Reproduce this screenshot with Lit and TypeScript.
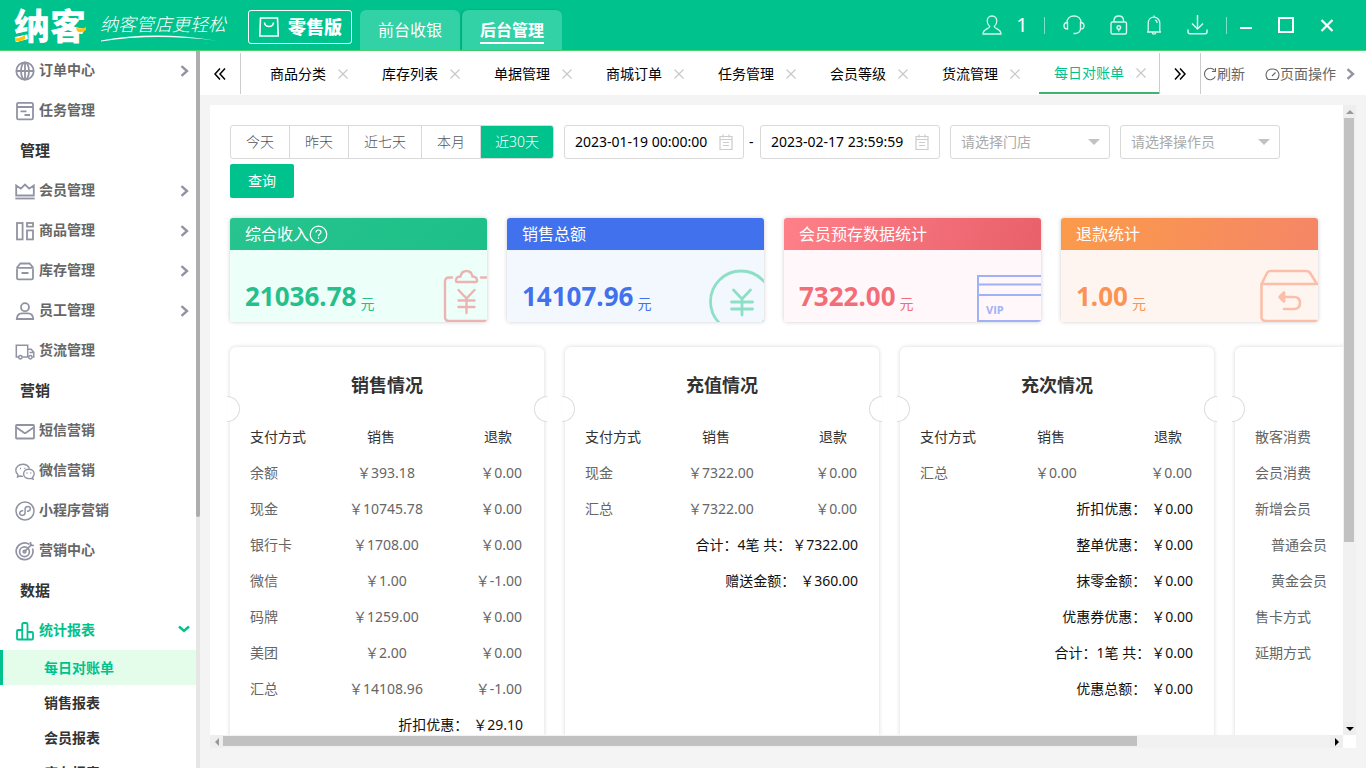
import { LitElement, html, svg, css, nothing } from "lit";
import { customElement, property } from "lit/decorators.js";
import { classMap } from "lit/directives/class-map.js";

const base = css`
  * {
    box-sizing: border-box;
  }
  svg {
    display: block;
    flex: none;
    fill: none;
    stroke: currentColor;
  }
  button,
  input,
  select {
    font: inherit;
    color: inherit;
    margin: 0;
    padding: 0;
    border: 0;
    background: none;
  }
  a {
    color: inherit;
    text-decoration: none;
  }
`;

const menuIcons: Record<string, unknown> = {
  globe: svg`<g stroke-width="1.8"><circle cx="10" cy="10" r="8.7"/><ellipse cx="10" cy="10" rx="4" ry="8.7"/><path d="M10 1.3v17.4M1.3 10h17.4"/></g>`,
  task: svg`<g stroke-width="1.8"><rect x="2" y="1.8" width="16" height="16.6" rx="1.5"/><path d="M2 6h16M5.5 10.3h6M9.5 14h5.5"/></g>`,
  crown: svg`<g stroke-width="1.8"><path d="M1.2 4.5v10h17.6v-10l-4.6 3.2L10 3.6 5.8 7.7z"/><path d="M.3 17.5h19.4" /></g>`,
  goods: svg`<g stroke-width="1.8"><rect x="2" y="2" width="5.6" height="16.4"/><rect x="12" y="2" width="6" height="3.6"/><rect x="12" y="9.4" width="6" height="9"/></g>`,
  stock: svg`<g stroke-width="1.8"><path d="M2 8v9q0 1.4 1.4 1.4h13.2q1.4 0 1.4-1.4V8M1.2 6.9h17.6M2 6.5l3.4-4h9.2l3.4 4M6.5 12h7"/></g>`,
  staff: svg`<g stroke-width="1.8"><circle cx="10" cy="6.2" r="4"/><path d="M1.8 18c.3-4 2.6-5.6 5-5.6h6.4c2.4 0 4.700 1.600 5 5.600z"/></g>`,
  truck: svg`<g stroke-width="1.5"><path d="M3.500 16H1.300V4.300h11.400V16H7.500M12.700 8.300h3.500l2.600 3v4.700h-1.300M14.500 11.500h4"/><circle cx="5.400" cy="16.200" r="1.700"/><circle cx="15.400" cy="16.200" r="1.700"/></g>`,
  mail: svg`<g stroke-width="1.800"><rect x="1" y="4" width="18" height="13.500" rx=".8"/><path d="M1.500 6.500L9 11.800q1 .7 2 0l7.500-5.300"/></g>`,
  wechat: svg`<g stroke-width="1.400"><path d="M8 15.300c-1 .1-1.900 0-2.800-.3L2.500 16l.5-2.300C1.500 12.500.8 11 .8 9.300c0-3.400 3.100-6 6.900-6 3.200 0 5.900 1.800 6.700 4.300"/><path d="M13.900 8.200c3 0 5.300 2 5.300 4.600 0 1.300-.6 2.400-1.500 3.300l.4 2.100-2.100-.9c-.6.200-1.300.3-2.100.3-3 0-5.300-2.100-5.300-4.800s2.300-4.600 5.300-4.600z"/><path d="M5 7.500h1M9.300 7.500h1M11.500 12h1M15.300 12h1" /></g>`,
  mini: svg`<g stroke-width="1.500"><circle cx="10" cy="10" r="9"/><path d="M8.200 9.800c-2.200-.3-3.500.8-3.500 2.300 0 1.400 1.100 2.300 2.500 2.300 1.700 0 2.900-1.200 2.900-2.800V8.300c0-1.500 1.100-2.700 2.800-2.700 1.400 0 2.400.9 2.400 2.200 0 1.600-1.300 2.500-3.300 2.300"/></g>`,
  target: svg`<g stroke-width="1.700"><path d="M14.200 3.300A8.400 8.400 0 1 0 17.500 7.500"/><circle cx="9.500" cy="10.700" r="4.900"/><path d="M9.500 10.700L17 3.200M15.500 1v3.500H19"/><circle cx="9.500" cy="10.700" r="1.300"/></g>`,
  chart: svg`<g stroke-width="1.800" stroke-linejoin="round"><path d="M7.200 18.500H3q-1 0-1-1V10q0-1 1-1h4.200M7.200 18.500V3.500Q7.200 2 8.700 2h2.300q1.500 0 1.500 1.500v15M12.500 11H17q1 0 1 1v5.500q0 1-1 1H7.200"/></g>`,
};

type MenuRow = { label: string; icon?: string; arrow?: boolean; open?: boolean };
const menu: MenuRow[] = [
  { label: "订单中心", icon: "globe", arrow: true },
  { label: "任务管理", icon: "task" },
  { label: "管理" },
  { label: "会员管理", icon: "crown", arrow: true },
  { label: "商品管理", icon: "goods", arrow: true },
  { label: "库存管理", icon: "stock", arrow: true },
  { label: "员工管理", icon: "staff", arrow: true },
  { label: "货流管理", icon: "truck" },
  { label: "营销" },
  { label: "短信营销", icon: "mail" },
  { label: "微信营销", icon: "wechat" },
  { label: "小程序营销", icon: "mini" },
  { label: "营销中心", icon: "target" },
  { label: "数据" },
  { label: "统计报表", icon: "chart", open: true },
];
const reports = ["每日对账单", "销售报表", "会员报表", "库存报表"];
const tabs = ["商品分类", "库存列表", "单据管理", "商城订单", "任务管理", "会员等级", "货流管理", "每日对账单"];
const ranges = ["今天", "昨天", "近七天", "本月", "近30天"];

const stats = [
  { tone: "green", title: "综合收入", amount: "21036.78", help: true },
  { tone: "blue", title: "销售总额", amount: "14107.96" },
  { tone: "red", title: "会员预存数据统计", amount: "7322.00" },
  { tone: "orange", title: "退款统计", amount: "1.00" },
];

const artwork: Record<string, unknown> = {
  green: svg`<g stroke="#edb3b3" stroke-width="2.400" stroke-linecap="round"><path d="M9 8.500H6q-4 0-4 4V48q0 4 4 4h38M38 8.500h6"/><path d="M14.500 13q-2 0-1.500-2 .5-3.500 4.500-3.500 1-5.500 6-5.500t6 5.500q4 0 4.500 3.500.5 2-1.500 2z"/><path d="M15.500 21l8 8.500 8-8.500M23.500 29.500V44M15.500 31.500h16M15.500 38h16"/></g>`,
  blue: svg`<g stroke="#8ddfc6" stroke-width="2.800" stroke-linecap="round"><circle cx="32" cy="32.500" r="30.500"/><path d="M24.500 21l8.500 9 8.500-9M33 30v16M22.500 33h21M22.500 40h21"/></g>`,
  red: svg`<g stroke="#9fb2f6" stroke-width="2"><path d="M66 7H2v45h64M2 15.500h64M2 26h64"/></g><text x="10" y="45" class="vip">VIP</text>`,
  orange: svg`<g stroke="#fbbfa9" stroke-width="2.600" stroke-linecap="round" stroke-linejoin="round"><path d="M59 15H2.500L8 4q1-2 3-2h36q3 0 4.500 2.500L58 15M2.500 15v33q0 4 4.500 4h52M23 28h12q6 0 6 6t-6 6H25"/><path d="M25 23.500L20.500 28l4.500 4.500z" fill="#fbbfa9"/></g>`,
};
const artWidth: Record<string, number> = { green: 44, blue: 55, red: 65, orange: 59 };

@customElement("stat-card")
class StatCard extends LitElement {
  @property() tone = "green";
  @property() label = "";
  @property() amount = "";
  @property({ type: Boolean }) help = false;

  static styles = [
    base,
    css`
      :host {
        display: block;
        min-width: 0;
      }
      .card {
        border-radius: 3px;
        overflow: hidden;
        box-shadow: 0 0 4px rgba(0, 0, 0, 0.2);
      }
      .head {
        display: flex;
        align-items: center;
        height: 32px;
        padding: 0 15px;
        color: #fff;
        font-size: 16px;
      }
      .body {
        display: flex;
        justify-content: space-between;
        align-items: flex-end;
        height: 72px;
        padding-left: 15px;
      }
      .sum {
        display: flex;
        align-items: center;
        gap: 4px;
        padding-bottom: 8px;
        line-height: 36px;
      }
      .num {
        font-size: 26px;
        font-weight: 700;
      }
      .unit {
        font-size: 14px;
        line-height: 20px;
        padding-top: 16px;
      }
      .vip {
        font: 700 11px "Open Sans", sans-serif;
        fill: #9fb2f6;
        stroke: none;
      }
      .green .head { background: linear-gradient(135deg, #27c48f, #1dbf88); }
      .green .body { background: #edfff9; color: #25bf8c; }
      .blue .head { background: #4171ec; }
      .blue .body { background: #f3f8ff; color: #4171ec; }
      .red .head { background: linear-gradient(110deg, #ff8089, #e8606a); }
      .red .body { background: #fff7f9; color: #f26d78; }
      .orange .head { background: linear-gradient(110deg, #fb9b49, #f58667); }
      .orange .body { background: #fff5f0; color: #fb9355; }
    `,
  ];

  render() {
    const w = artWidth[this.tone];
    return html`<section class="card ${this.tone}">
      <div class="head">
        ${this.label}
        ${this.help
          ? html`<svg width="19" height="19" viewBox="0 0 19 19" stroke-width="1.200"><circle cx="9.500" cy="9.500" r="8.300" /><path d="M7 7.500q0-2.500 2.500-2.500T12 7.200c0 1.800-2.500 1.900-2.500 4M9.500 12.500V14" /></svg>`
          : nothing}
      </div>
      <div class="body">
        <div class="sum"><span class="num">${this.amount}</span><span class="unit">元</span></div>
        <svg width=${w} height="53" viewBox="0 0 ${w} 53">${artwork[this.tone]}</svg>
      </div>
    </section>`;
  }
}

type Ticket = {
  title: string;
  rows?: string[][];
  foot?: { label: string; value: string; tight?: boolean }[];
  list?: { label: string; sub?: boolean }[];
};

const tickets: Ticket[] = [
  {
    title: "销售情况",
    rows: [
      ["余额", "￥393.18", "￥0.00"],
      ["现金", "￥10745.78", "￥0.00"],
      ["银行卡", "￥1708.00", "￥0.00"],
      ["微信", "￥1.00", "￥-1.00"],
      ["码牌", "￥1259.00", "￥0.00"],
      ["美团", "￥2.00", "￥0.00"],
      ["汇总", "￥14108.96", "￥-1.00"],
    ],
    foot: [{ label: "折扣优惠：", value: "￥29.10" }],
  },
  {
    title: "充值情况",
    rows: [
      ["现金", "￥7322.00", "￥0.00"],
      ["汇总", "￥7322.00", "￥0.00"],
    ],
    foot: [
      { label: "合计：4笔 共：", value: "￥7322.00", tight: true },
      { label: "赠送金额：", value: "￥360.00" },
    ],
  },
  {
    title: "充次情况",
    rows: [["汇总", "￥0.00", "￥0.00"]],
    foot: [
      { label: "折扣优惠：", value: "￥0.00" },
      { label: "整单优惠：", value: "￥0.00" },
      { label: "抹零金额：", value: "￥0.00" },
      { label: "优惠券优惠：", value: "￥0.00" },
      { label: "合计：1笔 共：", value: "￥0.00", tight: true },
      { label: "优惠总额：", value: "￥0.00" },
    ],
  },
  {
    title: "",
    list: [
      { label: "散客消费" },
      { label: "会员消费" },
      { label: "新增会员" },
      { label: "普通会员", sub: true },
      { label: "黄金会员", sub: true },
      { label: "售卡方式" },
      { label: "延期方式" },
    ],
  },
];

@customElement("report-ticket")
class ReportTicket extends LitElement {
  @property({ attribute: false }) ticket!: Ticket;

  static styles = [
    base,
    css`
      :host {
        display: block;
        flex: none;
        width: 314px;
      }
      .card {
        position: relative;
        height: 100%;
        padding: 20px 20px;
        background: #fff;
        border-radius: 6px;
        box-shadow: 0 0 4px rgba(0, 0, 0, 0.16);
      }
      .notch {
        position: absolute;
        top: 49px;
        width: 13px;
        height: 26px;
        background: #fff;
        border: 1px solid #dcdcdc;
      }
      .left {
        left: -3px;
        border-left: 0;
        border-radius: 0 13px 13px 0;
      }
      .right {
        right: -3px;
        border-right: 0;
        border-radius: 13px 0 0 13px;
      }
      h2 {
        margin: 0 0 16px;
        min-height: 36px;
        font-size: 18px;
        line-height: 36px;
        text-align: center;
        color: #333;
      }
      table {
        width: 100%;
        table-layout: fixed;
        border-collapse: collapse;
      }
      th,
      td {
        height: 36px;
        padding: 0;
        font-weight: 400;
        text-align: center;
        color: #666;
      }
      thead th {
        padding-right: 12px;
        color: #333;
      }
      th:first-child {
        text-align: left;
      }
      th:last-child,
      td:last-child {
        text-align: right;
      }
      tbody td {
        padding-right: 2px;
      }
      tfoot td {
        padding-right: 1px;
        color: #111;
      }
      .value {
        margin-left: 5px;
      }
      .tight {
        margin-left: 1px;
      }
      ul {
        margin: 0;
        padding: 0;
        list-style: none;
        line-height: 36px;
        color: #666;
      }
      .sub {
        padding-left: 16px;
      }
    `,
  ];

  render() {
    const t = this.ticket;
    return html`<section class="card">
      <i class="notch left"></i><i class="notch right"></i>
      <h2>${t.title}</h2>
      ${t.rows
        ? html`<table>
            <thead><tr><th>支付方式</th><th>销售</th><th>退款</th></tr></thead>
            <tbody>${t.rows.map((r) => html`<tr><th scope="row">${r[0]}</th><td>${r[1]}</td><td>${r[2]}</td></tr>`)}</tbody>
            <tfoot>${t.foot!.map((f) => html`<tr><td colspan="3">${f.label}<span class=${classMap({ value: true, tight: !!f.tight })}>${f.value}</span></td></tr>`)}</tfoot>
          </table>`
        : html`<ul>${t.list!.map((l) => html`<li class=${classMap({ sub: !!l.sub })}>${l.label}</li>`)}</ul>`}
    </section>`;
  }
}

@customElement("app-root")
class AppRoot extends LitElement {
  static styles = [
    base,
    css`
      :host {
        display: grid;
        grid-template-rows: 50px minmax(0, 1fr);
        height: 100vh;
        overflow: hidden;
        background: #f4f4f4;
        font: 14px/20px "Noto Sans", "Noto Sans CJK SC", sans-serif;
        color: #000;
      }
      header {
        position: relative;
        z-index: 1;
        display: flex;
        align-items: flex-start;
        padding-left: 14px;
        background: #00c28c;
        box-shadow: 0 1px 0 #4bd16f;
        color: #fff;
      }
      .brand {
        position: relative;
        width: 74px;
        font-size: 36px;
        line-height: 54px;
        font-weight: 900;
        white-space: nowrap;
      }
      .accent {
        position: absolute;
        left: 0;
        top: 25px;
      }
      .slogan {
        width: 134px;
        padding: 14px 0 0 12px;
        font-size: 18px;
        line-height: 20px;
        font-style: italic;
        font-weight: 300;
        white-space: nowrap;
      }
      .edition {
        display: flex;
        align-items: center;
        gap: 9px;
        height: 34px;
        width: 104px;
        margin: 10px 8px 0 26px;
        padding-left: 10px;
        border: 1px solid #fff;
        border-radius: 3px;
        font-size: 18px;
        font-weight: 900;
      }
      .modes {
        display: flex;
        gap: 2px;
        padding-top: 10px;
      }
      .mode {
        width: 100px;
        height: 40px;
        border-radius: 6px 6px 0 0;
        background: #33d1a6;
        font-size: 16px;
        line-height: 24px;
        text-align: center;
      }
      .mode.on {
        font-weight: 700;
        box-shadow: -1px 0 2px rgba(0, 110, 80, 0.4);
      }
      .mode span {
        display: inline-block;
        padding-top: 2px;
        border-bottom: 2px solid transparent;
      }
      .mode.on span {
        border-color: #fff;
      }
      .tools {
        display: flex;
        align-items: center;
        height: 50px;
        margin-left: auto;
        padding-right: 31px;
        color: #d6f7ec;
      }
      .tools button {
        display: flex;
        align-items: center;
      }
      .count {
        width: 20px;
        margin: 0 12px 0 10px;
        font-size: 20px;
        color: #fff;
      }
      .rule {
        width: 1px;
        height: 17px;
        background: #7ce0c4;
      }
      .g12 { margin-right: 12px; }
      .g18 { margin-right: 18px; }
      .g25 { margin-right: 25px; }
      .win { color: #fff; }
      .shell {
        display: grid;
        grid-template-columns: 200px minmax(0, 1fr);
        min-height: 0;
      }
      aside {
        display: grid;
        grid-template-columns: minmax(0, 1fr) 4px;
        min-height: 0;
        overflow: hidden;
        background: #fff;
      }
      nav {
        min-width: 0;
        overflow: hidden;
      }
      .item {
        display: flex;
        align-items: center;
        gap: 4px;
        height: 40px;
        padding: 0 6px 0 15px;
        font-weight: 700;
        color: #666;
      }
      .item svg {
        color: #9193a3;
        margin-top: 2px;
      }
      .item .chev {
        margin-left: auto;
      }
      .item.open,
      .item.open svg {
        color: #00c28c;
      }
      .item.open .chev {
        margin-top: 0;
      }
      .group {
        padding-left: 20px;
        font-size: 15px;
        line-height: 40px;
        font-weight: 700;
        color: #333;
      }
      .report {
        display: block;
        padding-left: 41px;
        border-left: 3px solid transparent;
        line-height: 35px;
        font-weight: 700;
        color: #333;
      }
      .report.on {
        color: #00c28c;
        background: #e3fdea;
        border-color: #00c28c;
      }
      .sidebar-track {
        background: #e6e6e6;
      }
      .sidebar-thumb {
        height: 65%;
        border-radius: 0 0 2px 2px;
        background: #adadad;
      }
      main {
        display: grid;
        grid-template-rows: 45px minmax(0, 1fr);
        min-width: 0;
        min-height: 0;
      }
      .tabbar {
        display: flex;
        padding: 3px 0 1px;
        background: #fff;
      }
      .shift {
        display: grid;
        place-items: center;
        width: 41px;
        flex: none;
        border-right: 1px solid #ccc;
      }
      .tabs {
        display: flex;
        gap: 6px;
        flex: 1;
        min-width: 0;
        overflow: hidden;
        padding-left: 14px;
        border-right: 1px solid #ccc;
      }
      .tab {
        display: flex;
        flex: none;
        align-items: center;
        gap: 12px;
        padding: 2px 13px 0 15px;
        white-space: nowrap;
        border-bottom: 2px solid transparent;
      }
      .tab svg {
        color: #c8c8c8;
      }
      .tab.on {
        padding-top: 0;
        color: #00c28c;
        border-color: #3cb371;
      }
      .ops {
        display: flex;
        align-items: center;
        flex: none;
        padding: 0 10px 0 2px;
        color: #666;
      }
      .ops button {
        display: flex;
        align-items: center;
        margin-right: 20px;
      }
      .ops .last {
        margin-right: 8px;
      }
      .ops .chev {
        color: #9193a3;
      }
      .frame {
        display: grid;
        grid-template-columns: minmax(0, 1fr) 13px;
        grid-template-rows: minmax(0, 1fr) 13px;
        margin: 10px 10px 20px;
        background: #fff;
      }
      .page {
        display: flex;
        flex-direction: column;
        padding: 20px 0 0 20px;
        overflow: hidden;
      }
      form {
        display: flex;
        flex-wrap: wrap;
        align-items: center;
        gap: 5px 10px;
        padding-right: 25px;
      }
      .ranges {
        display: flex;
        height: 34px;
        border: 1px solid #d9d9d9;
        border-radius: 3px;
        overflow: hidden;
        font-weight: 300;
      }
      .ranges button {
        padding: 0 15px;
        border-right: 1px solid #d9d9d9;
        color: #555;
      }
      .ranges button:last-child {
        border: 0;
        padding: 0 14px;
        background: #00c28c;
        color: #fff;
      }
      .span {
        display: flex;
        align-items: center;
        gap: 5px;
      }
      .dash {
        width: 6px;
      }
      .date,
      .pick {
        display: flex;
        align-items: center;
        height: 34px;
        border: 1px solid #d9d9d9;
        border-radius: 3px;
        padding: 0 10px;
        background: #fff;
      }
      .date {
        width: 180px;
      }
      .date input {
        flex: 1;
        min-width: 0;
        height: 20px;
      }
      .date svg {
        color: #ccc;
      }
      .pick {
        width: 160px;
        padding-right: 9px;
        color: #aaa;
      }
      .pick select {
        flex: 1;
        min-width: 0;
        appearance: none;
        outline: 0;
      }
      .query {
        width: 64px;
        height: 34px;
        border-radius: 2px;
        background: #00c28c;
        color: #fff;
      }
      .stats {
        display: grid;
        grid-template-columns: repeat(4, minmax(0, 1fr));
        gap: 20px;
        padding: 20px 25px 0 0;
      }
      .tickets {
        display: flex;
        flex: none;
        gap: 21px;
        min-height: 480px;
        padding-top: 25px;
      }
      .vbar,
      .hbar {
        display: flex;
        background: #f1f1f1;
      }
      .vbar {
        flex-direction: column;
      }
      .arrow {
        display: grid;
        place-items: center;
        width: 13px;
        height: 13px;
        flex: none;
        background: #eee;
      }
      .arrow svg {
        fill: #000;
        stroke: none;
      }
      .arrow.dim svg {
        fill: #999;
      }
      .lane {
        flex: 1;
      }
      .vthumb {
        width: 10px;
        height: 70.2%;
        margin-left: 1px;
        background: #c1c1c1;
      }
      .hthumb {
        width: 82.6%;
        height: 10px;
        margin-top: 1px;
        background: #c1c1c1;
      }
    `,
  ];

  private chevron(down = false) {
    return html`<svg class="chev" width="12" height="12" viewBox="0 0 12 12" stroke-width="2.400"><path d=${down ? "M1 2.500L6 7l5-4.500" : "M3.500 1.200L9 6l-5.500 4.800"} /></svg>`;
  }

  private date(label: string, value: string) {
    return html`<label class="date">
      <input aria-label=${label} .value=${value} />
      <svg width="14" height="17" viewBox="0 0 14 17"><path d="M1 2.500h12v13H1zM1 5.500h12M4 .5v3M10 .5v3M4 8.500h6M4 11.500h6" stroke-width="1.200" /></svg>
    </label>`;
  }

  private pick(text: string) {
    return html`<label class="pick">
      <select aria-label=${text}><option>${text}</option></select>
      <svg width="12" height="6" viewBox="0 0 12 6"><path d="M0 0h12L6 6z" fill="#c2c2c2" stroke="none" /></svg>
    </label>`;
  }

  private arrow(d: string, dim = false) {
    return html`<i class=${classMap({ arrow: true, dim })}><svg width="8" height="8" viewBox="0 0 8 8"><path d=${d} /></svg></i>`;
  }

  render() {
    return html`
      <header>
        <div class="brand">纳客
          <svg class="accent" width="74" height="18" viewBox="0 0 74 18" stroke="none"><path d="M1 13q5 1 10-3v4q-4 3-10 2zM62 2q4 3 10 0v3q-5 4-9 1z" fill="#ffc20e" stroke="none" /></svg>
        </div>
        <div class="slogan">纳客管店更轻松
          <svg width="118" height="8" viewBox="0 0 118 8"><path d="M1 6.500Q55-3.500 117 6.800Q55-1 1 7.500z" fill="#fff" stroke="none" /></svg>
        </div>
        <div class="edition">
          <svg width="20" height="20" viewBox="0 0 20 20" stroke-width="1.600"><path d="M1.500 1h17l.7 18H.8zM5.500 5.500q.5 4 4.500 4t4.500-4" /></svg>零售版
        </div>
        <div class="modes">
          <button class="mode"><span>前台收银</span></button>
          <button class="mode on"><span>后台管理</span></button>
        </div>
        <div class="tools">
          <button aria-label="用户">
            <svg width="20" height="20" viewBox="0 0 20 20" stroke-width="1.300"><path d="M10 1c3 0 4.800 2 4.800 5 0 2.500-1.300 4.500-2.600 5.500.3 2.500 6.800 1.800 6.800 7.500H1c0-5.700 6.500-5 6.800-7.500C6.500 10.500 5.200 8.500 5.200 6c0-3 1.800-5 4.800-5z" /></svg>
            <span class="count">1</span>
          </button>
          <i class="rule g18"></i>
          <button class="g25" aria-label="客服"><svg width="22" height="20" viewBox="0 0 22 20" stroke-width="1.400"><path d="M4 7.500C4 3.500 7 1 11 1s7 2.500 7 6.500M4.500 7.500v6.500C2.500 14 1 12.500 1 10.700S2.500 7.500 4.500 7.500zM17.500 7.500v6.500c2 0 3.500-1.500 3.500-3.300s-1.500-3.200-3.500-3.200zM17.500 14q-.5 4-5 4.500M10.500 18.500h2.500" /></svg></button>
          <button class="g18" aria-label="锁屏"><svg width="18" height="20" viewBox="0 0 18 20" stroke-width="1.400"><rect x="1" y="7" width="15.500" height="12" rx="1.500" /><path d="M4 7V5.500C4 2.700 6 1 8.800 1s4.700 1.700 4.700 4.500V7M8.800 14v2.500" /><circle cx="8.800" cy="12.500" r="1.800" /></svg></button>
          <button class="g25" aria-label="通知"><svg width="16" height="20" viewBox="0 0 16 20" stroke-width="1.300"><path d="M1 17h14M2.200 17V8.500C2.200 4.800 4.500 2.200 8 2.200s5.800 2.600 5.800 6.300V17M6.300 17.500q0 1.700 1.700 1.700t1.700-1.700M8 .5v1.700M9 5q2 .5 2.200 3" /></svg></button>
          <button class="g18" aria-label="下载"><svg width="21" height="20" viewBox="0 0 21 20" stroke-width="1.500"><path d="M10.500 0v13.500M5 8.500l5.500 5.500L16 8.500M1 14.500v2.200q0 2 2 2h15q2 0 2-2v-2.200" /></svg></button>
          <i class="rule g12"></i>
          <button class="win g25" aria-label="最小化"><svg width="14" height="16" viewBox="0 0 14 16" stroke-width="2"><path d="M1 11h12" /></svg></button>
          <button class="win g25" aria-label="最大化"><svg width="16" height="16" viewBox="0 0 16 16" stroke-width="2"><rect x="1" y="1" width="14" height="14" /></svg></button>
          <button class="win" aria-label="关闭"><svg width="16" height="16" viewBox="0 0 16 16" stroke-width="2.200"><path d="M2.500 3l11 11M13.500 3l-11 11" /></svg></button>
        </div>
      </header>
      <div class="shell">
        <aside>
          <nav>
            ${menu.map((m) =>
              m.icon
                ? html`<a href="#" class=${classMap({ item: true, open: !!m.open })}>
                    <svg width="20" height="20" viewBox="0 0 20 20">${menuIcons[m.icon]}</svg>${m.label}
                    ${m.arrow ? this.chevron() : m.open ? this.chevron(true) : nothing}
                  </a>`
                : html`<div class="group">${m.label}</div>`
            )}
            ${reports.map((r, i) => html`<a href="#" class=${classMap({ report: true, on: i === 0 })}>${r}</a>`)}
          </nav>
          <div class="sidebar-track"><div class="sidebar-thumb"></div></div>
        </aside>
        <main>
          <div class="tabbar">
            <button class="shift" aria-label="向左"><svg width="12" height="12" viewBox="0 0 12 12" stroke-width="1.500"><path d="M6 .5L1 6l5 5.500M11 .5L6 6l5 5.500" /></svg></button>
            <div class="tabs">
              ${tabs.map((t, i) => html`<a href="#" class=${classMap({ tab: true, on: i === tabs.length - 1 })}>${t}<svg width="10" height="10" viewBox="0 0 10 10" stroke-width="1.200"><path d="M.5.5l9 9M9.500.5l-9 9" /></svg></a>`)}
            </div>
            <button class="shift" aria-label="向右"><svg width="12" height="12" viewBox="0 0 12 12" stroke-width="1.500"><path d="M1 .5L6 6l-5 5.500M6 .5L11 6l-5 5.500" /></svg></button>
            <div class="ops">
              <button><svg width="14" height="14" viewBox="0 0 14 14" stroke-width="1.100"><path d="M12.300 9.500A5.700 5.700 0 1 1 11.500 3.300M12.500 1v3.500H9" /></svg>刷新</button>
              <button class="last"><svg width="15" height="14" viewBox="0 0 15 14" stroke-width="1.100"><path d="M3 12.500C-.5 9 .8 2 7.500 2s8 7 4.500 10.500zM7 9l3.500-3.500" /></svg>页面操作</button>
              ${this.chevron()}
            </div>
          </div>
          <div class="frame">
            <div class="page">
              <form @submit=${(e: Event) => e.preventDefault()}>
                <div class="ranges">${ranges.map((r) => html`<button type="button">${r}</button>`)}</div>
                <div class="span">${this.date("开始时间", "2023-01-19 00:00:00")}<span class="dash">-</span>${this.date("结束时间", "2023-02-17 23:59:59")}</div>
                ${this.pick("请选择门店")} ${this.pick("请选择操作员")}
                <button class="query">查询</button>
              </form>
              <div class="stats">
                ${stats.map((s) => html`<stat-card .tone=${s.tone} .label=${s.title} .amount=${s.amount} .help=${!!s.help}></stat-card>`)}
              </div>
              <div class="tickets">${tickets.map((t) => html`<report-ticket .ticket=${t}></report-ticket>`)}</div>
            </div>
            <div class="vbar">
              ${this.arrow("M0 6h8L4 2z", true)}
              <div class="lane"><div class="vthumb"></div></div>
              ${this.arrow("M0 2h8L4 6z")}
            </div>
            <div class="hbar">
              ${this.arrow("M6 0v8L2 4z", true)}
              <div class="lane"><div class="hthumb"></div></div>
              ${this.arrow("M2 0v8l4-4z")}
            </div>
          </div>
        </main>
      </div>
    `;
  }
}
